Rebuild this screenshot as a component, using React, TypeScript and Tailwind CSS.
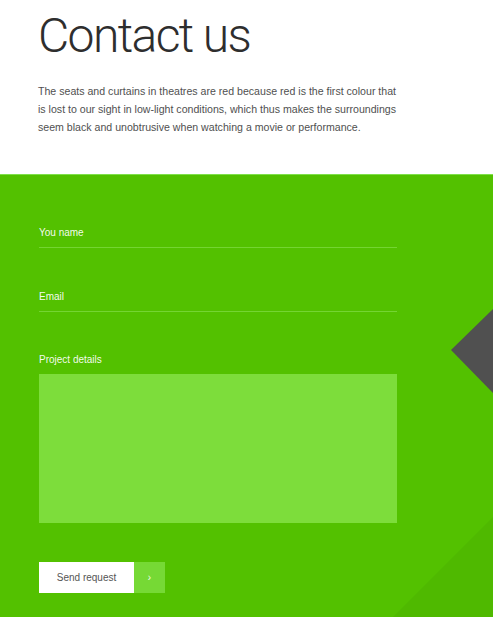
import React from "react";

const Field: React.FC<{ label: string; className?: string }> = ({ label, className }) => (
    <div className={className}>
        <div className="text-[10px] leading-[14px] text-white/95">{label}</div>
        <div className="h-[8px] border-b border-[#74d532]"></div>
    </div>
);

export default function App() {
    return (
        <div className="min-h-[617px] w-[493px] bg-white font-['Liberation_Sans',sans-serif] overflow-hidden">
            {/* header */}
            <div className="h-[174px] px-[38px] pt-2">
                <h1 className="font-['Roboto',sans-serif] font-light text-[48px] leading-[56px] tracking-[-1.6px] text-[#2e2e2e]">
                    Contact us
                </h1>
                <p className="mt-[18px] text-[10.6px] leading-[18px] text-[#505050] whitespace-nowrap">
                    The seats and curtains in theatres are red because red is the first colour that<br />
                    is lost to our sight in low-light conditions, which thus makes the surroundings<br />
                    seem black and unobtrusive when watching a movie or performance.
                </p>
            </div>

            {/* form */}
            <div className="relative h-[443px] bg-[#53c100] border-t border-[#7fe04a] px-[39px] pt-[51px]">
                <svg className="absolute right-0 bottom-0" width="100" height="100" viewBox="0 0 100 100">
                    <polygon points="100,0 100,100 0,100" fill="#4fb900" />
                </svg>
                <svg className="absolute right-0 top-[134px]" width="42" height="84" viewBox="0 0 42 84">
                    <polygon points="42,0 0,41 42,84" fill="#505050" />
                </svg>

                <div className="relative w-[358px]">
                    <Field label="You name" />
                    <Field label="Email" className="mt-[42px]" />
                    <div className="mt-[41px] text-[10px] leading-[14px] text-white/95">Project details</div>
                    <div className="mt-[7px] h-[149px] bg-[#7ddd3b]"></div>

                    <div className="mt-[39px] flex h-[31px]">
                        <button className="w-[95px] bg-white text-[10px] text-[#555]">Send request</button>
                        <button className="w-[31px] bg-[#76d935] text-[10px] text-white/90">›</button>
                    </div>
                </div>
            </div>
        </div>
    );
}
